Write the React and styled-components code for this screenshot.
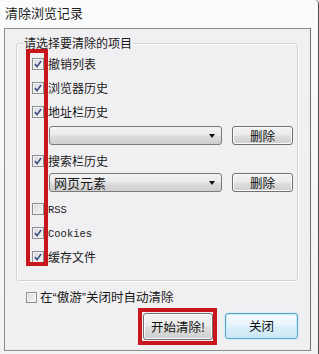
import React from 'react';
import styled, { createGlobalStyle } from 'styled-components';

const GlobalStyle = createGlobalStyle`
  html, body {
    margin: 0;
    padding: 0;
    background: #ffffff;
  }
  body {
    font-family: "Noto Sans CJK SC", "Noto Sans", sans-serif;
    font-size: 12px;
    color: #1a1a1a;
  }
`;

const Window = styled.div`
  width: 319px;
  height: 354px;
  box-sizing: border-box;
  border-right: 1px solid #4b4b4b;
  border-top-right-radius: 4px;
  background: linear-gradient(#fafbfc, #f2f3f5);
  display: flex;
  flex-direction: column;
`;

const TitleBar = styled.div`
  height: 28px;
  flex: none;
  display: flex;
  align-items: center;
  padding: 0 0 3px 5px;
  box-sizing: border-box;
  font-size: 13px;
  color: #1e1e1e;
`;

const Panel = styled.div`
  flex: 1;
  margin: 0 7px 3px 4px;
  border: 1px solid #8c8c8c;
  border-right-color: #6e6e6e;
  background: #f0eff1;
  padding: 0 12px 0 11px;
  display: flex;
  flex-direction: column;
`;

const Group = styled.div`
  position: relative;
  margin-top: 14px;
  border: 1px solid #d3d3d6;
  border-radius: 3px;
  box-shadow: inset 1px 1px 0 #ffffff, 1px 1px 0 #ffffff;
  padding: 8px 0 11px 0;
  display: flex;
  flex-direction: column;
`;

const Legend = styled.span`
  position: absolute;
  top: -9px;
  left: 6px;
  padding: 0 1px;
  background: #f0eff1;
  line-height: 16px;
`;

const Row = styled.div`
  display: flex;
  align-items: center;
  gap: 4px;
  height: 24px;
  padding-left: 15px;
  box-sizing: border-box;
  line-height: 14px;
`;

const Latin = styled.span`
  font-family: "Liberation Mono", monospace;
  font-size: 10.5px;
`;

const Box = styled.span`
  width: ${({ $size }) => $size}px;
  height: ${({ $size }) => $size}px;
  box-sizing: border-box;
  flex: none;
  border: 1px solid #8e8f8f;
  background: linear-gradient(135deg, #d6d7d9, #f8f8f9);
  box-shadow: inset 0 0 0 1px #f3f3f3;
  display: flex;
  align-items: center;
  justify-content: center;
`;

const ComboRow = styled.div`
  display: flex;
  align-items: flex-start;
  gap: 10px;
  height: ${({ $h }) => $h}px;
  padding: ${({ $top }) => $top}px 0 0 32px;
  box-sizing: border-box;
`;

const Combo = styled.div`
  width: 173px;
  height: 19px;
  box-sizing: border-box;
  border: 1px solid #7a7a7a;
  border-radius: 3px;
  background: linear-gradient(#f3f3f3 0%, #ebebeb 45%, #dcdcdc 55%, #cfcfcf 100%);
  display: flex;
  align-items: center;
  padding: 0 6px 0 4px;
  line-height: 14px;
  font-size: 13px;
`;

const Arrow = styled.span`
  margin-left: auto;
  width: 0;
  height: 0;
  border-left: 3.5px solid transparent;
  border-right: 3.5px solid transparent;
  border-top: 4px solid #111;
`;

const Btn = styled.button`
  width: ${({ $w }) => $w}px;
  height: ${({ $h }) => $h}px;
  box-sizing: border-box;
  padding: 0;
  border: 1px solid #707070;
  border-radius: 3px;
  background: linear-gradient(#f2f2f2 0%, #ebebeb 45%, #dddddd 55%, #cfcfcf 100%);
  box-shadow: inset 0 0 0 1px #fbfbfb;
  font-family: inherit;
  font-size: 12.5px;
  color: #111;
  line-height: 14px;
`;

const CloseBtn = styled(Btn)`
  border-color: #5aa9cf;
  background: linear-gradient(#f4fafd 0%, #e9f5fb 45%, #d9eef8 55%, #cbe7f5 100%);
  box-shadow: inset 0 0 0 1px #c4e8f6, 0 0 2px #a6dcef;
`;

const Marker = styled.div`
  position: absolute;
  left: 9px;
  top: 5px;
  width: 22px;
  height: 217px;
  box-sizing: border-box;
  border: 4px solid #c8161d;
  pointer-events: none;
`;

const AutoRow = styled.div`
  display: flex;
  align-items: center;
  gap: 3px;
  height: 20px;
  margin-top: 6px;
  padding-left: 10px;
  line-height: 14px;
  font-size: 12.5px;
`;

const Quote = styled.span`
  font-family: "Liberation Sans", sans-serif;
`;

const Actions = styled.div`
  display: flex;
  justify-content: flex-end;
  gap: 12px;
  margin-top: 6px;
`;

const Highlight = styled.div`
  position: relative;
  display: flex;

  &::after {
    content: '';
    position: absolute;
    inset: -5px -4px -5px -5px;
    border: 4px solid #c8161d;
    pointer-events: none;
  }
`;

function CheckBox({ checked, size = 12 }) {
  return (
    <Box $size={size}>
      {checked && (
        <svg width="8" height="8" viewBox="0 0 8 8">
          <path d="M0.9 4.1 L3 6.6 L7.1 1" fill="none" stroke="#3d5289" strokeWidth="1.6" />
        </svg>
      )}
    </Box>
  );
}

function Item({ checked = true, children }) {
  return (
    <Row>
      <CheckBox checked={checked} />
      <span>{children}</span>
    </Row>
  );
}

export default function App() {
  return (
    <>
      <GlobalStyle />
      <Window>
        <TitleBar>清除浏览记录</TitleBar>
        <Panel>
          <Group>
            <Legend>请选择要清除的项目</Legend>
            <Item>撤销列表</Item>
            <Item>浏览器历史</Item>
            <Item>地址栏历史</Item>
            <ComboRow $h={25} $top={2}>
              <Combo>
                <Arrow />
              </Combo>
              <Btn $w={61} $h={19}>删除</Btn>
            </ComboRow>
            <Item>搜索栏历史</Item>
            <ComboRow $h={24} $top={0}>
              <Combo>
                <span>网页元素</span>
                <Arrow />
              </Combo>
              <Btn $w={61} $h={19}>删除</Btn>
            </ComboRow>
            <Item checked={false}><Latin>RSS</Latin></Item>
            <Item><Latin>Cookies</Latin></Item>
            <Item>缓存文件</Item>
            <Marker />
          </Group>
          <AutoRow>
            <CheckBox checked={false} size={11} />
            <span>在<Quote>“</Quote>傲游<Quote>”</Quote>关闭时自动清除</span>
          </AutoRow>
          <Actions>
            <Highlight>
              <Btn $w={70} $h={27}>开始清除!</Btn>
            </Highlight>
            <CloseBtn $w={73} $h={26}>关闭</CloseBtn>
          </Actions>
        </Panel>
      </Window>
    </>
  );
}
